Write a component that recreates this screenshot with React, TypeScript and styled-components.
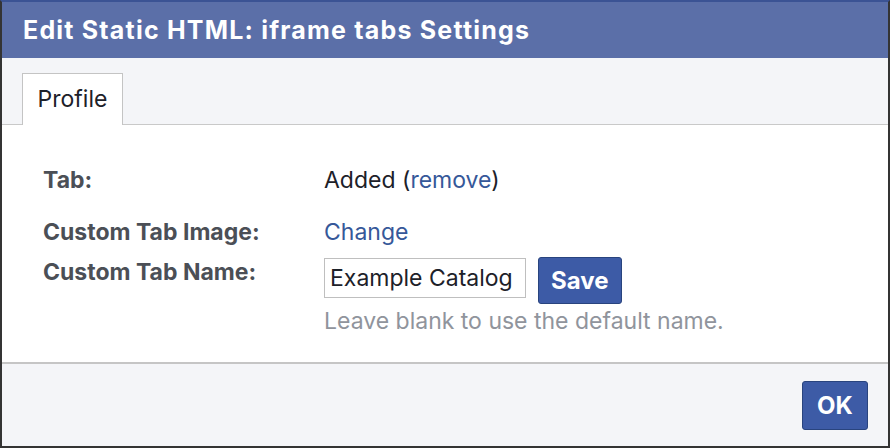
import React from 'react';
import styled, { createGlobalStyle } from 'styled-components';

const GlobalStyle = createGlobalStyle`
  html, body {
    margin: 0;
    padding: 0;
    background: #333;
  }
  body {
    font-family: Inter, "Liberation Sans", Arial, sans-serif;
  }
`;

const Dialog = styled.div`
  width: 890px;
  height: 448px;
  box-sizing: border-box;
  border: 2px solid #343434;
  border-top-color: #3b5394;
  display: flex;
  flex-direction: column;
  background: #fff;
`;

const Header = styled.div`
  height: 56px;
  flex: none;
  background: #5b6fa8;
  display: flex;
  align-items: center;
  padding-left: 21px;
`;

const Title = styled.h1`
  margin: 0;
  color: #fff;
  font-size: 25px;
  font-weight: 700;
  letter-spacing: 1.2px;
`;

const TabBar = styled.div`
  height: 52px;
  flex: none;
  padding: 14px 0 0 20px;
  background: #f4f5f8;
  border-bottom: 1px solid #c9c9c9;
  display: flex;
  align-items: flex-end;
`;

const Tab = styled.div<{ $active?: boolean }>`
  height: 52px;
  width: 101px;
  box-sizing: border-box;
  margin-bottom: -1px;
  border: 1px solid #c4c4c4;
  border-bottom: none;
  background: ${(p) => (p.$active ? '#fff' : 'transparent')};
  display: flex;
  align-items: center;
  justify-content: center;
  padding-bottom: 2px;
  color: #1d2129;
  font-size: 23px;
`;

const Body = styled.div`
  flex: 1;
  padding: 41px 0 0 41px;
  background: #fff;
`;

const Grid = styled.div`
  display: grid;
  grid-template-columns: 281px 1fr;
`;

const Label = styled.div<{ $h?: number; $offset?: number }>`
  height: ${(p) => (p.$h ? `${p.$h}px` : 'auto')};
  padding-top: ${(p) => p.$offset ?? 0}px;
  color: #4b4f56;
  font-size: 23px;
  font-weight: 700;
  line-height: 28px;
`;

const Value = styled.div<{ $h?: number }>`
  height: ${(p) => (p.$h ? `${p.$h}px` : 'auto')};
  color: #1d2129;
  font-size: 23px;
  line-height: 28px;
`;

const Link = styled.a`
  color: #365899;
  text-decoration: none;
  cursor: pointer;
`;

const NameRow = styled.div`
  display: flex;
  align-items: flex-start;
  gap: 12px;
  padding-top: 3px;
`;

const Input = styled.input`
  width: 202px;
  height: 40px;
  box-sizing: border-box;
  border: 1px solid #bfbfbf;
  padding: 0 5px;
  font-family: inherit;
  font-size: 23px;
  color: #1d2129;
  margin-top: 1px;
  outline: none;
`;

const Button = styled.button`
  box-sizing: border-box;
  border: 1px solid #29447e;
  border-radius: 3px;
  background: #3d5ba6;
  color: #fff;
  font-family: inherit;
  font-weight: 700;
  font-size: 24px;
  padding: 0 12px;
  height: 47px;
`;

const Hint = styled.div`
  color: #90949c;
  font-size: 23px;
  line-height: 28px;
  margin-top: 3px;
`;

const Footer = styled.div`
  height: 84px;
  flex: none;
  background: #f4f5f8;
  border-top: 2px solid #c5c5c5;
  display: flex;
  justify-content: flex-end;
  align-items: flex-start;
  padding: 17px 20px 0 0;
  box-sizing: border-box;
`;

const OkButton = styled(Button)`
  height: 49px;
  width: 66px;
  padding: 0;
  font-size: 24px;
`;

export default function App() {
  return (
    <>
      <GlobalStyle />
      <Dialog>
        <Header>
          <Title>Edit Static HTML: iframe tabs Settings</Title>
        </Header>
        <TabBar>
          <Tab $active>Profile</Tab>
        </TabBar>
        <Body>
          <Grid>
            <Label $h={52}>Tab:</Label>
            <Value $h={52}>
              Added (<Link>remove</Link>)
            </Value>
            <Label $h={36}>Custom Tab Image:</Label>
            <Value $h={36}>
              <Link>Change</Link>
            </Value>
            <Label $offset={4}>Custom Tab Name:</Label>
            <Value>
              <NameRow>
                <Input defaultValue="Example Catalog" />
                <Button>Save</Button>
              </NameRow>
              <Hint>Leave blank to use the default name.</Hint>
            </Value>
          </Grid>
        </Body>
        <Footer>
          <OkButton>OK</OkButton>
        </Footer>
      </Dialog>
    </>
  );
}
